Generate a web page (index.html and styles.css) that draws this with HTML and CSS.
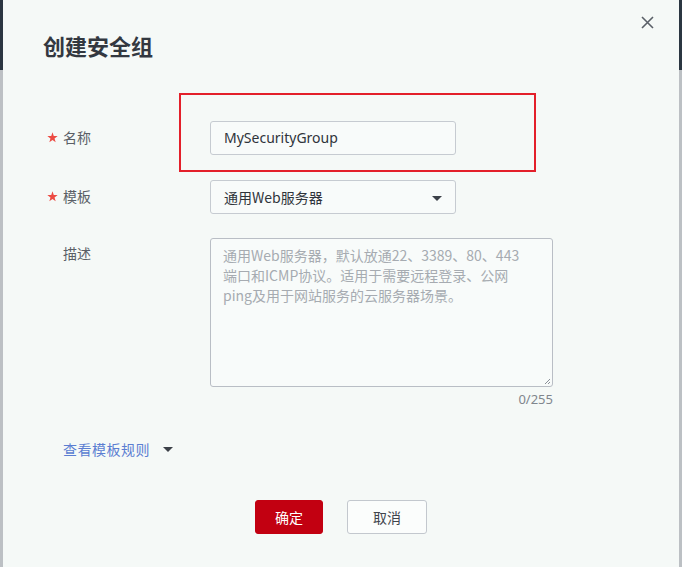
FILE: index.html
```html
<!DOCTYPE html>
<html lang="zh">
<head>
<meta charset="utf-8">
<link rel="stylesheet" href="styles.css">
</head>
<body>
<div class="page">
  <div class="edge edge-left"><span class="dark"></span></div>
  <div class="dialog">
    <div class="head">
      <h1 class="title">创建安全组</h1>
      <span class="close"><svg width="13" height="13" viewBox="0 0 13 13"><path d="M1 1L12 12M12 1L1 12" stroke="#5a6068" stroke-width="1.6" fill="none"/></svg></span>
    </div>
    <div class="form">
      <div class="row row-name">
        <div class="label"><span class="star"><svg width="11" height="11" viewBox="0 0 10 10"><path d="M5 0.3L6.15 3.65L9.7 3.7L6.85 5.85L7.9 9.3L5 7.25L2.1 9.3L3.15 5.85L0.3 3.7L3.85 3.65Z" fill="#ec4b43"/></svg></span>名称</div>
        <div class="field">
          <div class="input">MySecurityGroup</div>
        </div>
        <div class="highlight"></div>
      </div>
      <div class="row">
        <div class="label"><span class="star"><svg width="11" height="11" viewBox="0 0 10 10"><path d="M5 0.3L6.15 3.65L9.7 3.7L6.85 5.85L7.9 9.3L5 7.25L2.1 9.3L3.15 5.85L0.3 3.7L3.85 3.65Z" fill="#ec4b43"/></svg></span>模板</div>
        <div class="field">
          <div class="input select">通用Web服务器<span class="caret"></span></div>
        </div>
      </div>
      <div class="row row-desc">
        <div class="label"><span class="star"></span>描述</div>
        <div class="field">
          <div class="textarea">通用Web服务器，默认放通22、3389、80、443<br>端口和ICMP协议。适用于需要远程登录、公网<br>ping及用于网站服务的云服务器场景。<svg class="grip" width="7" height="7" viewBox="0 0 7 7"><path d="M6 1L1 6M6 4L4 6" stroke="#8a9098" stroke-width="1"/></svg></div>
          <div class="count">0/255</div>
        </div>
      </div>
      <div class="rules"><span class="link">查看模板规则</span><span class="caret dark"></span></div>
      <div class="buttons">
        <button class="btn primary">确定</button>
        <button class="btn">取消</button>
      </div>
    </div>
  </div>
  <div class="edge edge-right"><span class="dark"></span></div>
</div>
</body>
</html>
```
FILE: styles.css
```css
* { box-sizing: border-box; }
html, body { margin: 0; padding: 0; }
body {
  width: 682px;
  height: 567px;
  overflow: hidden;
  font-family: "Noto Sans", "Noto Sans CJK SC", sans-serif;
  background: #f5f9f7;
}
.page {
  display: flex;
  width: 682px;
  height: 567px;
}
.edge {
  width: 3px;
  flex: none;
  background: #bcc0c4;
  display: flex;
  flex-direction: column;
}
.edge .dark {
  height: 70px;
  background: #2b3641;
}
.dialog {
  flex: 1;
  background: #f5f9f7;
  position: relative;
}
.head {
  height: 93px;
  padding: 29px 0 0 40px;
}
.title {
  margin: 0;
  font-size: 22px;
  line-height: 32px;
  font-weight: 700;
  color: #333840;
  font-family: "Noto Sans CJK SC", sans-serif;
}
.close {
  position: absolute;
  top: 16px;
  right: 25px;
  width: 13px;
  height: 13px;
  display: block;
}
.close svg { display: block; }
.form {
  display: flex;
  flex-direction: column;
}
.row {
  display: flex;
  align-items: flex-start;
  position: relative;
}
.row-name { padding-top: 28px; height: 87px; }
.row-desc { margin-top: 24px; }
.label {
  width: 207px;
  padding-left: 44px;
  font-size: 14px;
  line-height: 32px;
  color: #5a5f66;
  font-family: "Noto Sans CJK SC", sans-serif;
  display: flex;
  align-items: center;
}
.row-desc .label { line-height: 30px; }
.star {
  width: 16px;
  height: 11px;
  display: block;
  flex: none;
}
.star svg { display: block; }
.input {
  width: 246px;
  height: 34px;
  border: 1px solid #c6cbd1;
  border-radius: 3px;
  background: #f8fbfa;
  padding: 0 13px;
  font-size: 14px;
  line-height: 32px;
  color: #2f343b;
  position: relative;
}
.select { font-family: "Noto Sans CJK SC", sans-serif; }
.caret {
  display: inline-block;
  width: 0;
  height: 0;
  border-left: 5px solid transparent;
  border-right: 5px solid transparent;
  border-top: 5px solid #3c4148;
}
.select .caret {
  position: absolute;
  right: 13px;
  top: 15px;
}
.highlight {
  position: absolute;
  left: 176px;
  top: 0;
  width: 357px;
  height: 79px;
  border: 2px solid #e3202a;
  pointer-events: none;
}
.textarea {
  position: relative;
  width: 343px;
  height: 149px;
  border: 1px solid #b9bec5;
  border-radius: 3px;
  background: #f8fbfa;
  padding: 6px 12px;
  font-size: 14px;
  line-height: 20px;
  color: #a6abb1;
  font-family: "Noto Sans CJK SC", sans-serif;
  white-space: nowrap;
}
.grip {
  position: absolute;
  right: 1px;
  bottom: 1px;
}
.count {
  text-align: right;
  font-size: 13px;
  line-height: 24px;
  color: #80868d;
}
.rules {
  margin-top: 27px;
  padding-left: 60px;
  display: flex;
  align-items: center;
  gap: 13px;
  height: 22px;
}
.link {
  color: #5b7ed2;
  font-size: 14px;
  font-family: "Noto Sans CJK SC", sans-serif;
  letter-spacing: 0.5px;
}
.rules .caret { border-top-color: #3c4148; }
.buttons {
  margin-top: 40px;
  display: flex;
  justify-content: center;
  gap: 24px;
}
.btn {
  height: 34px;
  width: 80px;
  border: 1px solid #c3c8ce;
  border-radius: 3px;
  background: #fbfdfc;
  color: #40454c;
  font-size: 14px;
  font-family: "Noto Sans CJK SC", sans-serif;
  padding: 0;
}
.btn.primary {
  width: 68px;
  background: #c20011;
  border-color: #c20011;
  color: #ffffff;
}
```
